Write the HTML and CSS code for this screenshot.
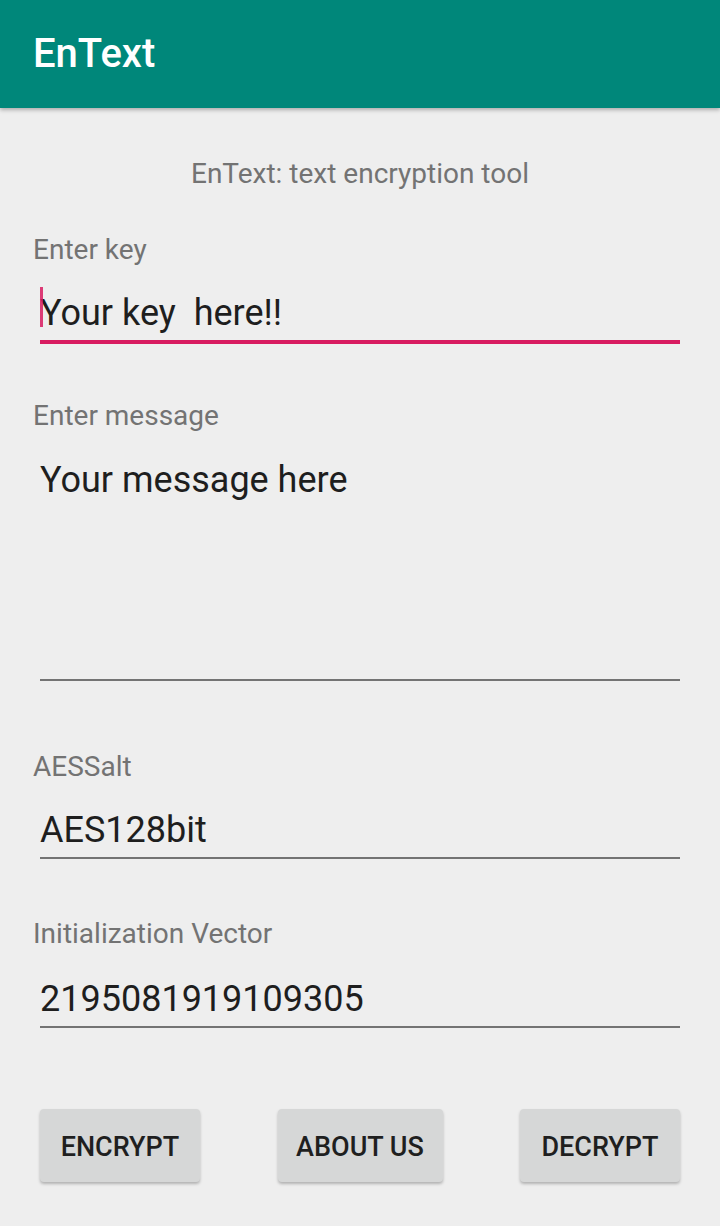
FILE: index.html
```html
<!DOCTYPE html>
<html>
<head>
<meta charset="utf-8">
<title>EnText</title>
<link rel="stylesheet" href="styles.css">
</head>
<body>
<header class="appbar">
  <h1 class="appbar-title">EnText</h1>
</header>
<main class="content">
  <p class="subtitle">EnText: text encryption tool</p>

  <label class="field-label label-key">Enter key</label>
  <div class="field field-focused field-key"><span class="cursor"></span>Your key&nbsp; here!!</div>

  <label class="field-label label-message">Enter message</label>
  <div class="field field-multiline">Your message here</div>

  <label class="field-label label-salt">AESSalt</label>
  <div class="field field-salt">AES128bit</div>

  <label class="field-label label-iv">Initialization Vector</label>
  <div class="field field-iv">2195081919109305</div>

  <div class="button-row">
    <button class="btn btn-encrypt">ENCRYPT</button>
    <button class="btn btn-about">ABOUT US</button>
    <button class="btn btn-decrypt">DECRYPT</button>
  </div>
</main>
</body>
</html>
```

FILE: styles.css
```css
* {
  box-sizing: border-box;
}

html, body {
  margin: 0;
  padding: 0;
}

body {
  width: 720px;
  height: 1226px;
  overflow: hidden;
  background: #eeeeee;
  font-family: Roboto, "Noto Sans", "Liberation Sans", sans-serif;
}

.appbar {
  position: relative;
  z-index: 2;
  height: 108px;
  background: #00877a;
  box-shadow: 0 2px 4px rgba(0, 0, 0, 0.28);
  padding-left: 33px;
}

.appbar-title {
  margin: 0;
  font-size: 40px;
  font-weight: 500;
  line-height: 108px;
  color: #ffffff;
}

.content {
  display: flex;
  flex-direction: column;
}

.subtitle {
  margin: 46px 0 0;
  text-align: center;
  font-size: 28px;
  line-height: 40px;
  color: #737373;
}

.field-label {
  display: block;
  padding-left: 33px;
  font-size: 28px;
  line-height: 36px;
  color: #737373;
}

.label-key { margin-top: 38px; }
.label-message { margin-top: 54px; }
.label-salt { margin-top: 68px; }
.label-iv { margin-top: 57px; }

.field {
  position: relative;
  margin: 21px 40px 0;
  font-size: 36px;
  line-height: 48px;
  color: #1e1e1e;
  padding-bottom: 3px;
  border-bottom: 2px solid #737373;
  white-space: nowrap;
}

.field-key {
  margin-top: 21px;
}

.field-focused {
  border-bottom: 4px solid #d81b60;
}

.cursor {
  position: absolute;
  left: 0;
  top: -2px;
  width: 3px;
  height: 40px;
  background: #d81b60;
  opacity: 0.85;
}

.field-multiline {
  margin-top: 22px;
  height: 225px;
}

.field-iv {
  margin-top: 23px;
}

.button-row {
  display: flex;
  justify-content: space-between;
  margin: 81px 40px 0;
}

.btn {
  height: 73px;
  padding: 2px 0 0;
  border: none;
  border-radius: 4px;
  background: #d6d7d7;
  box-shadow: 0 2px 3px rgba(0, 0, 0, 0.25);
  font-family: Roboto, "Noto Sans", "Liberation Sans", sans-serif;
  font-size: 27px;
  font-weight: 500;
  color: #1f1f1f;
  white-space: nowrap;
}

.btn-encrypt, .btn-decrypt {
  width: 160px;
}

.btn-about {
  width: 165px;
}
```
